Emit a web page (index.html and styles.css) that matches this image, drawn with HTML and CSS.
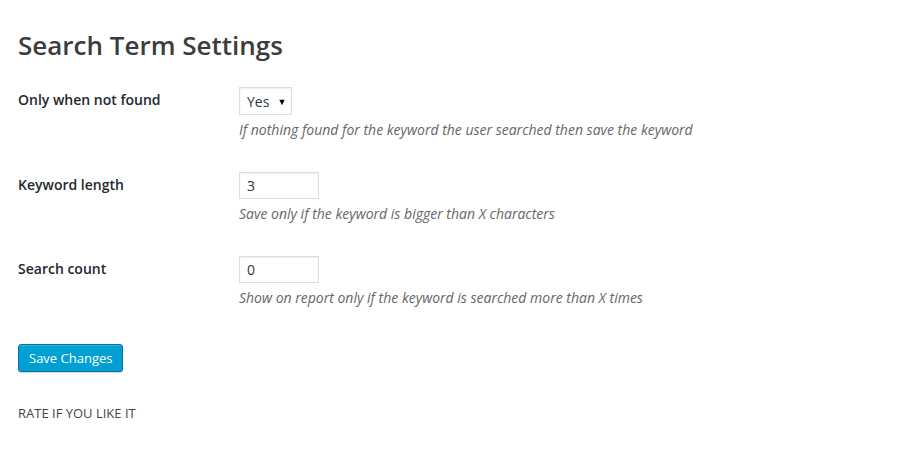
FILE: index.html
```html
<!DOCTYPE html>
<html>
<head>
<meta charset="utf-8">
<link rel="stylesheet" href="styles.css">
</head>
<body>
<div class="wrap">
  <h1 class="title">Search Term Settings</h1>
  <form class="form">
    <div class="row">
      <div class="label">Only when not found</div>
      <div class="field">
        <div class="select"><span>Yes</span><span class="arrow">▼</span></div>
        <p class="desc">If nothing found for the keyword the user searched then save the keyword</p>
      </div>
    </div>
    <div class="row">
      <div class="label">Keyword length</div>
      <div class="field">
        <div class="input">3</div>
        <p class="desc">Save only if the keyword is bigger than X characters</p>
      </div>
    </div>
    <div class="row">
      <div class="label">Search count</div>
      <div class="field">
        <div class="input">0</div>
        <p class="desc">Show on report only if the keyword is searched more than X times</p>
      </div>
    </div>
    <div class="actions">
      <span class="button">Save Changes</span>
    </div>
  </form>
  <p class="rate">RATE IF YOU LIKE IT</p>
</div>
</body>
</html>
```
FILE: styles.css
```css
html, body {
  margin: 0;
  padding: 0;
  background: #fff;
}
body {
  font-family: "Open Sans", "Liberation Sans", sans-serif;
  color: #444;
  font-size: 13px;
}
.wrap {
  padding: 22px 18px 0 18px;
}
.title {
  margin: 0;
  font-size: 26px;
  font-weight: 600;
  line-height: 46px;
  color: #3c3c3c;
}
.form {
  margin-top: 19px;
  display: flex;
  flex-direction: column;
}
.row {
  display: flex;
  height: 84px;
}
.row:first-child {
  height: 85px;
}
.label {
  width: 221px;
  flex: none;
  font-size: 14px;
  font-weight: 600;
  color: #23282d;
  line-height: 24px;
  padding-top: 1px;
}
.field {
  display: flex;
  flex-direction: column;
  align-items: flex-start;
}
.select {
  box-sizing: border-box;
  height: 28px;
  width: 53px;
  border: 1px solid #ddd;
  box-shadow: inset 0 1px 2px rgba(0,0,0,0.07);
  display: flex;
  align-items: center;
  padding-left: 7px;
  font-size: 14px;
  color: #32373c;
  gap: 8px;
}
.arrow {
  font-size: 9px;
  color: #000;
}
.input {
  box-sizing: border-box;
  height: 27px;
  width: 80px;
  border: 1px solid #ddd;
  box-shadow: inset 0 1px 2px rgba(0,0,0,0.07);
  padding-left: 7px;
  font-size: 14px;
  line-height: 25px;
  color: #32373c;
}
.desc {
  margin: 5px 0 0;
  font-size: 14px;
  font-style: italic;
  color: #666;
  line-height: 20px;
}
.actions {
  margin-top: 4px;
}
.button {
  display: inline-block;
  box-sizing: border-box;
  height: 28px;
  padding: 0 10px;
  line-height: 26px;
  background: #00a0d2;
  border: 1px solid #0073aa;
  border-radius: 3px;
  color: #fff;
  font-size: 13px;
  box-shadow: inset 0 1px 0 rgba(120,200,230,.5), 0 1px 0 rgba(0,0,0,.15);
}
.rate {
  margin: 32px 0 0;
  font-size: 13px;
  color: #444;
}
```
